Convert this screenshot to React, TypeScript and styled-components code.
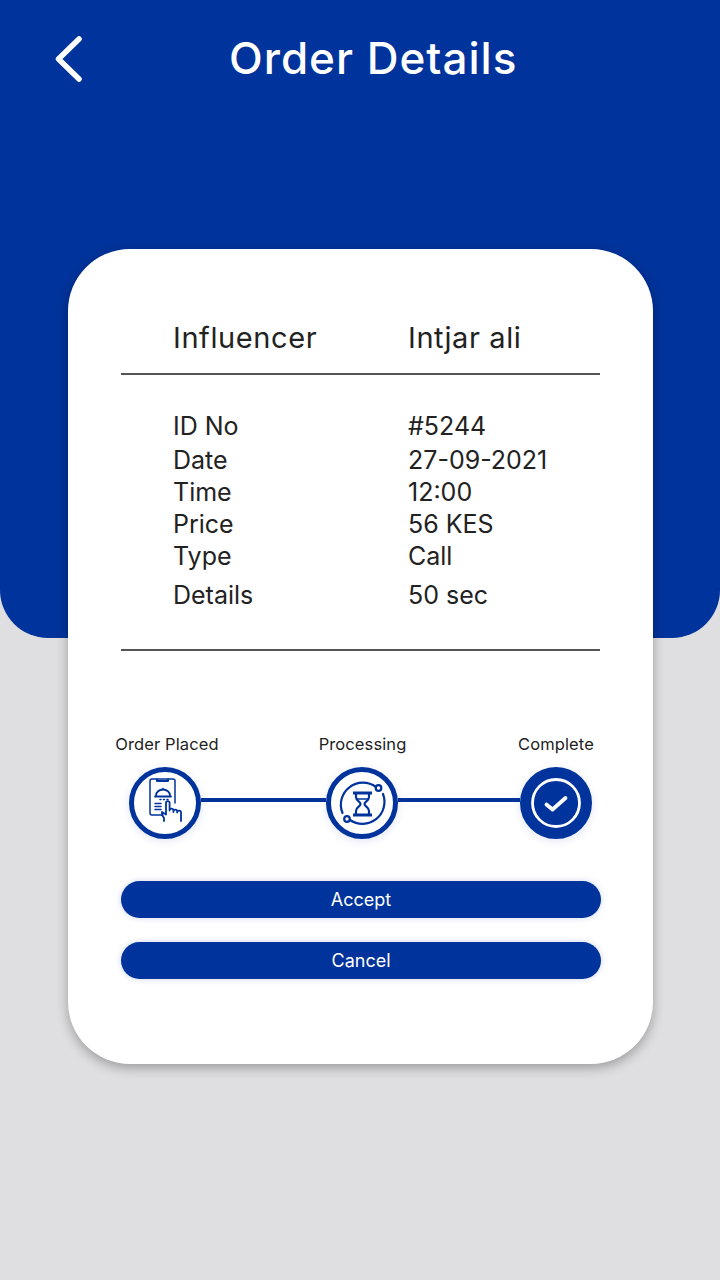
import styled, { createGlobalStyle } from "styled-components"

const BLUE = "#00339b"

const DETAILS = [
  { label: "ID No", value: "#5244", gap: 0 },
  { label: "Date", value: "27-09-2021", gap: 2 },
  { label: "Time", value: "12:00", gap: 0 },
  { label: "Price", value: "56 KES", gap: 0 },
  { label: "Type", value: "Call", gap: 0 },
  { label: "Details", value: "50 sec", gap: 7 },
]

const GlobalStyle = createGlobalStyle`
  body {
    margin: 0;
    background: #dfdfe1;
    font-family: "Inter", "Liberation Sans", sans-serif;
  }
`

function OrderIcon() {
  return (
    <svg width="62" height="62" viewBox="0 0 62 62" fill="none" stroke={BLUE} strokeWidth="1.5" strokeLinecap="round" strokeLinejoin="round">
      <path d="M29 43H18a2 2 0 0 1-2-2V9a2 2 0 0 1 2-2h21a2 2 0 0 1 2 2v22" />
      <path d="M23 7.500v1.500h11V7.500" strokeWidth="2" />
      <path d="M22 23.500a7 6 0 0 1 14 0" strokeWidth="1.800" />
      <path d="M21 24.500h16" strokeWidth="1.800" />
      <path d="M29 16.500v1" />
      <path d="M26 27.500h1M29.500 27.500h1M33 27.500h1" />
      <path d="M21 31.500h6M21 34.500h6M21 37.500h6" />
      <path d="M30 49v-3l-2-3v-3l4 2.500V31a1.800 1.800 0 0 1 3.600 0v7.500M35.600 38.500a1.900 1.900 0 0 1 3.800 0v1.500M39.400 39.500a1.900 1.900 0 0 1 3.800 0v1M43.200 40.500a1.900 1.900 0 0 1 3.800 0V49" strokeWidth="1.800" />
    </svg>
  )
}

function HourglassIcon() {
  return (
    <svg width="62" height="62" viewBox="0 0 62 62" fill="none" stroke={BLUE} strokeWidth="2.2" strokeLinecap="round">
      <path d="M45 15A22 22 0 0 0 11.500 41" />
      <path d="M19 48A22 22 0 0 0 52 22" />
      <circle cx="47.500" cy="16" r="2.800" />
      <circle cx="16" cy="47" r="2.800" />
      <path d="M22 21h19M22 43h19" strokeWidth="2.800" strokeLinecap="butt" />
      <path d="M25 21v4c0 4 4.500 4.500 4.500 7s-4.500 3-4.500 7v4M38 21v4c0 4-4.500 4.500-4.500 7s4.500 3 4.500 7v4" strokeWidth="2.200" />
      <path d="M26.500 27h10" strokeWidth="1.600" />
    </svg>
  )
}

function CheckIcon() {
  return (
    <svg width="50" height="50" viewBox="0 0 50 50" fill="none" stroke="#fff" strokeWidth="2.800" strokeLinecap="round" strokeLinejoin="round">
      <circle cx="25" cy="25" r="23.500" />
      <path d="M15.500 26.500l6 5 13-11.500" strokeWidth="3.800" />
    </svg>
  )
}

export default function App() {
  return (
    <Page>
      <GlobalStyle />
      <Header>
        <BackButton aria-label="Back">
          <svg width="30" height="48" viewBox="0 0 30 48" fill="none" stroke="#fff" strokeWidth="5.500" strokeLinecap="round" strokeLinejoin="round">
            <path d="M25 4L4.500 24 25 44" />
          </svg>
        </BackButton>
        <Title>Order Details</Title>
      </Header>

      <Card>
        <SummaryRow>
          <SummaryText>Influencer</SummaryText>
          <SummaryText>Intjar ali</SummaryText>
        </SummaryRow>
        <Divider />

        <DetailList>
          {DETAILS.map((item) => (
            <DetailRow key={item.label} $gap={item.gap}>
              <DetailText>{item.label}</DetailText>
              <DetailText>{item.value}</DetailText>
            </DetailRow>
          ))}
        </DetailList>
        <Divider />

        <Stepper>
          <Step>
            <StepLabel $inset={4}>Order Placed</StepLabel>
            <StepCircle>
              <OrderIcon />
            </StepCircle>
          </Step>
          <Connector $width={125} />
          <Step>
            <StepLabel $inset={1}>Processing</StepLabel>
            <StepCircle>
              <HourglassIcon />
            </StepCircle>
          </Step>
          <Connector $width={122} />
          <Step>
            <StepLabel>Complete</StepLabel>
            <StepCircle $filled>
              <CheckIcon />
            </StepCircle>
          </Step>
        </Stepper>

        <Actions>
          <ActionButton>Accept</ActionButton>
          <ActionButton>Cancel</ActionButton>
        </Actions>
      </Card>
    </Page>
  )
}

const Page = styled.div`
  width: 720px;
  height: 1280px;
  overflow: hidden;
  background: #dfdfe1;
`

const Header = styled.header`
  height: 638px;
  box-sizing: border-box;
  display: flex;
  align-items: flex-start;
  padding: 35px 0 0 54px;
  background: ${BLUE};
  border-radius: 0 0 48px 48px;
`

const BackButton = styled.button`
  display: flex;
  width: 30px;
  height: 48px;
  padding: 0;
  border: none;
  background: none;
`

const Title = styled.h1`
  margin: -3px 0 0 145px;
  font-size: 44px;
  line-height: 52px;
  font-weight: 500;
  letter-spacing: 1px;
  white-space: nowrap;
  color: #fff;
`

const Card = styled.main`
  width: 585px;
  height: 815px;
  box-sizing: border-box;
  margin: -389px 0 0 68px;
  padding: 70px 53px 0;
  position: relative;
  background: #fff;
  border-radius: 62px;
  box-shadow: 0 4px 12px rgba(0, 0, 0, 0.3);
`

const SummaryRow = styled.div`
  display: grid;
  grid-template-columns: 235px 1fr;
  height: 54px;
  padding-left: 52px;
  align-items: flex-start;
`

const SummaryText = styled.span`
  font-size: 29px;
  line-height: 38px;
  letter-spacing: 0.6px;
  color: #222;
`

const Divider = styled.hr`
  width: 479px;
  height: 2px;
  margin: 0;
  border: none;
  background: #555;
`

const DetailList = styled.div`
  padding: 35px 0 38px 52px;
`

const DetailRow = styled.div<{ $gap: number }>`
  display: grid;
  grid-template-columns: 235px 1fr;
  height: 32px;
  margin-top: ${(props) => props.$gap}px;
  align-items: center;
`

const DetailText = styled.span`
  font-size: 25px;
  line-height: 30px;
  color: #222;
`

const Stepper = styled.div`
  display: flex;
  align-items: flex-start;
  margin: 81px 0 0 8px;
`

const Step = styled.div`
  display: flex;
  flex-direction: column;
  align-items: center;
  width: 72px;
`

const StepLabel = styled.span<{ $inset?: number }>`
  height: 24px;
  margin-bottom: 11px;
  padding-left: ${(props) => props.$inset ?? 0}px;
  font-size: 16.5px;
  line-height: 24px;
  letter-spacing: 0.1px;
  white-space: nowrap;
  color: #222;
`

const StepCircle = styled.div<{ $filled?: boolean }>`
  width: 72px;
  height: 72px;
  box-sizing: border-box;
  display: flex;
  align-items: center;
  justify-content: center;
  border: 5px solid ${BLUE};
  border-radius: 50%;
  background: ${(props) => (props.$filled ? BLUE : "#fff")};
  box-shadow: 0 2px 8px rgba(0, 51, 155, 0.12);
`

const Connector = styled.div<{ $width: number }>`
  flex: 0 0 ${(props) => props.$width}px;
  height: 4px;
  margin-top: 66px;
  background: ${BLUE};
`

const Actions = styled.div`
  display: flex;
  flex-direction: column;
  gap: 24px;
  margin-top: 42px;
`

const ActionButton = styled.button`
  width: 480px;
  height: 37px;
  padding: 0;
  border: none;
  border-radius: 19px;
  background: ${BLUE};
  box-shadow: 0 0 6px rgba(0, 51, 155, 0.2);
  font-family: inherit;
  font-size: 18px;
  color: #fff;
`
